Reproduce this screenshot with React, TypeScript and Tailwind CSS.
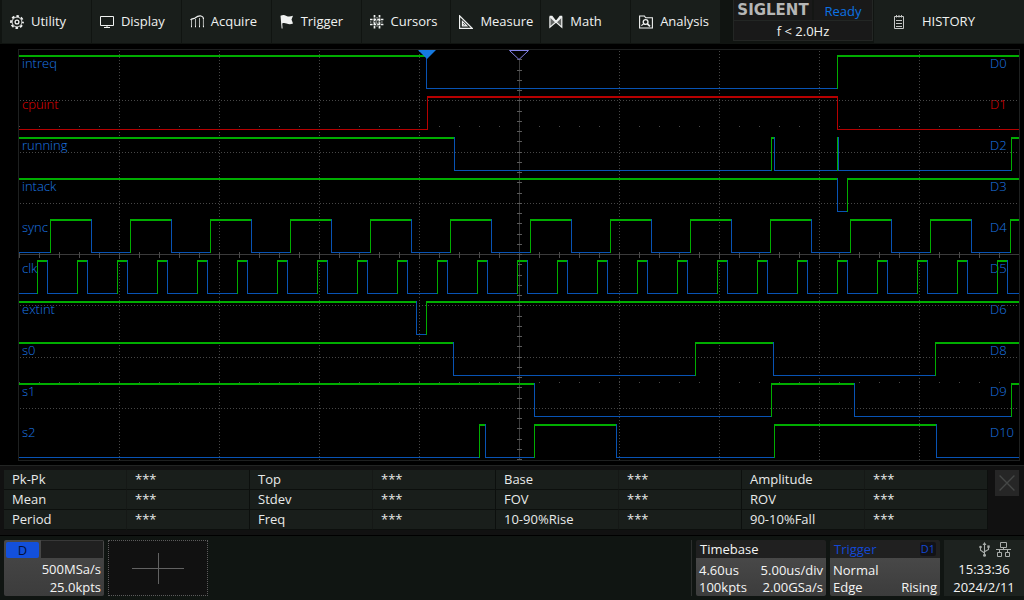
import type { ReactNode } from "react";

/* ---------- icons ---------- */

function Icon({ children, size = "size-[14px]" }: { children: ReactNode; size?: string }) {
  return (
    <svg
      viewBox="0 0 14 14"
      className={`${size} shrink-0`}
      fill="none"
      stroke="currentColor"
      strokeWidth="1.2"
      aria-hidden="true"
    >
      {children}
    </svg>
  );
}

const GearIcon = () => (
  <Icon>
    <circle cx="7" cy="7" r="6" strokeWidth="1.8" strokeDasharray="2.6 2.112" strokeDashoffset="1.3" />
    <circle cx="7" cy="7" r="4.9" strokeWidth="0.9" />
    <circle cx="7" cy="7" r="1.9" strokeWidth="1.3" />
  </Icon>
);

const DisplayIcon = () => (
  <Icon>
    <path d="M0.5 1.5H13.5V10.5H0.5Z" strokeWidth="1" />
    <path d="M7 10.5V12.5M4 12.5H10" strokeWidth="1" />
  </Icon>
);

const AcquireIcon = () => (
  <Icon>
    <path d="M0.5 5C2 3 3.5 4 5 3C7 1.5 9 0.6 11 1C12.8 1.4 13.5 2.5 13.5 4" />
    <path d="M1.5 5V12M5.5 4V12M9.5 3V12M13.4 4V12" strokeWidth="0.9" strokeOpacity="0.8" />
    <path d="M1 11.5H2M5 11.5H6M9 11.5H10M13 11.5H14" strokeWidth="1.6" />
  </Icon>
);

const FlagIcon = () => (
  <Icon>
    <path
      d="M0.5 0.8C3 -0.3 4.5 0 6.5 1C8.5 1.9 10.5 1.6 13 0.8L11.5 4.6L13 8.6C10.5 9.6 8.5 9.4 6.5 8.5C4.8 7.8 3.5 7.8 2.2 8.4L2.6 13.6H1.6Z"
      fill="currentColor"
      stroke="none"
    />
  </Icon>
);

const CursorsIcon = () => (
  <Icon>
    <path d="M4.5 0V14M9.5 0V14" strokeWidth="1.7" strokeDasharray="2.6 1" />
    <path d="M0 4.5H14M0 9.5H14" strokeWidth="1.7" strokeDasharray="2.6 1" />
    <path d="M0 7H14M7 2V12" strokeWidth="0.8" strokeDasharray="1.4 1.4" />
  </Icon>
);

const MeasureIcon = () => (
  <Icon>
    <path d="M0.6 0.8V13.4H13.2Z" />
    <path d="M3.4 6.4V10.8H7.8Z" />
    <path d="M4 8.8L5.6 10.6" strokeWidth="1" />
  </Icon>
);

const MathIcon = () => (
  <Icon>
    <path d="M0.6 1.4H3L7 6.6L11 1.4H13.2M0.9 1.4V12.2L7 7L12.8 12.2V1.4" strokeWidth="1.2" />
    <path d="M1 2V12L7 7ZM13 2V12L7 7Z" fill="currentColor" fillOpacity="0.35" stroke="none" />
    <path d="M1.4 1.6L7 7L12.6 1.6" strokeWidth="1.8" />
  </Icon>
);

const AnalysisIcon = () => (
  <Icon>
    <path d="M0.6 1H5.4L6.6 2.8H13.4V13H0.6Z" strokeWidth="1.1" />
    <circle cx="6.6" cy="7" r="2.4" strokeWidth="1.3" />
    <path d="M8.4 8.8L11 11.4" strokeWidth="1.7" />
    <path d="M2.4 10.6L4.8 8.6" />
  </Icon>
);

const HistoryIcon = () => (
  <svg viewBox="0 0 10 14" className="h-[14px] w-[10px] shrink-0" fill="none" stroke="#c4c6c5" aria-hidden="true">
    <path d="M0.5 1.5H9.5V13.5H0.5Z" />
    <path d="M2.5 0V2.5M5 0V2.5M7.5 0V2.5" />
    <path d="M2 5.5H8M2 8.5H8M2 11.5H8" />
  </svg>
);

const UsbIcon = () => (
  <svg viewBox="0 0 11 15" className="h-[15px] w-[11px]" fill="none" stroke="#a9adab" strokeWidth="1.1" aria-hidden="true">
    <path d="M5.5 2V13M1.5 5V8.2L5.5 11M9.5 4.5V7.4L5.5 9.8" />
    <path d="M5.5 0L7.4 3H3.6Z" fill="#a9adab" stroke="none" />
    <circle cx="5.5" cy="13.2" r="1.5" fill="#a9adab" stroke="none" />
    <circle cx="1.5" cy="5" r="1.3" fill="#a9adab" stroke="none" />
    <path d="M8.3 3.4H10.7V5.8H8.3Z" fill="#a9adab" stroke="none" />
  </svg>
);

const NetworkIcon = () => (
  <svg viewBox="0 0 15 15" className="size-[15px]" fill="none" stroke="#a9adab" aria-hidden="true">
    <path d="M4.5 0.5H10.5V5.5H4.5ZM1.5 10.5H5.5V14.5H1.5ZM9.5 10.5H13.5V14.5H9.5Z" />
    <path d="M7.5 5.5V7.5M0 7.5H15M3.5 7.5V10.5M11.5 7.5V10.5" />
  </svg>
);

/* ---------- data ---------- */

const menu = [
  { label: "Utility", icon: <GearIcon /> },
  { label: "Display", icon: <DisplayIcon /> },
  { label: "Acquire", icon: <AcquireIcon /> },
  { label: "Trigger", icon: <FlagIcon /> },
  { label: "Cursors", icon: <CursorsIcon /> },
  { label: "Measure", icon: <MeasureIcon /> },
  { label: "Math", icon: <MathIcon /> },
  { label: "Analysis", icon: <AnalysisIcon /> },
];

type Signal = { name: string; channel: string; startHigh: boolean; edges: number[]; selected?: boolean };

const clockEdges = (first: number, width: number, period: number) => {
  const edges: number[] = [];
  for (let x = first; x < 1019; x += period) {
    edges.push(x);
    if (x + width < 1019) edges.push(x + width);
  }
  return edges;
};

const signals: Signal[] = [
  { name: "intreq", channel: "D0", startHigh: true, edges: [426, 837] },
  { name: "cpuint", channel: "D1", startHigh: false, edges: [427, 837], selected: true },
  { name: "running", channel: "D2", startHigh: true, edges: [454, 771, 774, 837, 838, 1011] },
  { name: "intack", channel: "D3", startHigh: true, edges: [837, 847] },
  { name: "sync", channel: "D4", startHigh: false, edges: clockEdges(50, 41, 80) },
  { name: "clk", channel: "D5", startHigh: false, edges: clockEdges(37, 10, 40) },
  { name: "extint", channel: "D6", startHigh: true, edges: [416, 426] },
  { name: "s0", channel: "D8", startHigh: true, edges: [453, 695, 773, 935] },
  { name: "s1", channel: "D9", startHigh: true, edges: [534, 771, 854, 1011] },
  { name: "s2", channel: "D10", startHigh: false, edges: [479, 485, 534, 616, 774, 936] },
];

const measurements = [
  ["Pk-Pk", "Top", "Base", "Amplitude"],
  ["Mean", "Stdev", "FOV", "ROV"],
  ["Period", "Freq", "10-90%Rise", "90-10%Fall"],
];

/* ---------- waveform ---------- */

const LEFT = 19;
const RIGHT = 1019;

function Trace({ signal, top }: { signal: Signal; top: number }) {
  const rise = signal.selected ? "#b60000" : "#00ad00";
  const fall = signal.selected ? "#b60000" : "#0853b4";
  const points = [LEFT, ...signal.edges, RIGHT - 1];
  return (
    <g>
      {points.slice(0, -1).map((x, i) => {
        const high = signal.startHigh === (i % 2 === 0);
        const width = points[i + 1] - x + 1;
        return (
          <g key={x}>
            {i > 0 && <rect x={x} y={top} width="1" height="34" fill={high ? rise : fall} />}
            <rect x={x} y={high ? top : top + 33} width={width} height={high ? 2 : 1} fill={high ? rise : fall} />
          </g>
        );
      })}
    </g>
  );
}

const columns = [119, 219, 319, 419, 619, 719, 819, 919];
const rows = [100, 152, 203, 305, 357, 408];

function Waveform() {
  const xTicks = Array.from({ length: 50 }, (_, i) => 19 + i * 20);
  const yTicks = Array.from({ length: 40 }, (_, i) => Math.round(49 + (i + 1) * 10.25));
  return (
    <svg
      viewBox="18 49 1002 412"
      preserveAspectRatio="none"
      className="col-start-1 row-start-1 size-full"
      shapeRendering="crispEdges"
      role="img"
      aria-label="Digital channels"
    >
      <rect x="18.5" y="49.5" width="1001" height="411" fill="none" stroke="#1e2020" />
      <g stroke="#474747" strokeDasharray="1 2">
        {columns.map((x) => (
          <line key={x} x1={x + 0.5} x2={x + 0.5} y1="51" y2="460" />
        ))}
        {rows.map((y) => (
          <line key={y} x1="20" x2="1017" y1={y + 0.5} y2={y + 0.5} />
        ))}
      </g>
      <rect x="19" y="254" width="1000" height="1" fill="#3a3a3a" />
      <rect x="519" y="50" width="1" height="410" fill="#3a3a3a" />
      {xTicks.map((x) => (
        <g key={x} fill="#4a4a4a">
          <rect x={x} y="252" width="1" height="6" />
          <rect x={x} y="126" width="1" height="1" />
          <rect x={x} y="382" width="1" height="1" />
        </g>
      ))}
      {yTicks.map((y) => (
        <rect key={y} x="517" y={y} width="5" height="1" fill="#5a5a5a" />
      ))}
      {signals.map((s, i) => (
        <Trace key={s.channel} signal={s} top={55 + i * 41} />
      ))}
      <g shapeRendering="auto">
        <path d="M418 50H436L427 59Z" fill="#1579e0" />
        <path d="M509.5 50.5H528.5L519 59.5Z" fill="#000" stroke="#8583e8" />
      </g>
    </svg>
  );
}

function WaveformLabels() {
  return (
    <ul className="col-start-1 row-start-1 grid grid-rows-10 pb-0.5 font-light">
      {signals.map((s) => (
        <li
          key={s.channel}
          className={`flex justify-between pt-1 pl-1 leading-5 ${s.selected ? "text-[#e60000]" : "text-[#1c78e6]"}`}
        >
          <span>{s.name}</span>
          <span className="w-[30px]">{s.channel}</span>
        </li>
      ))}
    </ul>
  );
}

/* ---------- page ---------- */

function TopBar() {
  return (
    <header className="flex h-11 shrink-0 bg-[#101411] pl-0.5 text-[#f0f2f1]">
      <nav className="flex h-[43px] flex-1">
        {menu.map((m) => (
          <button
            key={m.label}
            type="button"
            className="flex flex-1 items-center gap-[7px] border-r border-[#101411] bg-[#191e1b] pl-2 text-left"
          >
            {m.icon}
            {m.label}
          </button>
        ))}
      </nav>
      <div className="ml-3 flex h-[41px] w-[140px] flex-col border border-t-0 border-[#232624] bg-[#191919]">
        <div className="flex h-[21px] border-b border-[#232624]">
          <div className="flex-1 border-r-2 border-[#141614] text-center font-['DejaVu_Sans',sans-serif] text-[15px] leading-5 font-bold text-[#b6b6b6]">
            SIGLENT
          </div>
          <div className="w-[58px] pt-px text-center leading-5 text-[#0c72e4]">Ready</div>
        </div>
        <div className="text-center leading-5">f &lt; 2.0Hz</div>
      </div>
      <button type="button" className="ml-px flex h-[43px] w-[150px] items-center gap-[18px] bg-[#191e1b] pl-5">
        <HistoryIcon />
        HISTORY
      </button>
    </header>
  );
}

function Measurements() {
  return (
    <section className="flex items-start gap-[7px] border-y border-[#222423] border-b-black bg-[#111] pt-1 pr-[5px] pb-[5px] pl-1">
      <table className="flex-1 table-fixed border-separate border-spacing-0 text-left text-[#e8eae9]">
        <tbody>
          {measurements.map((row) => (
            <tr key={row[0]}>
              {row.map((name) => [
                <th
                  key={name}
                  scope="row"
                  className="h-5 w-[123px] border-r border-b border-r-[#151816] border-b-[#0c0f0d] bg-[#191e1b] p-0 pl-2 leading-[19px] font-normal"
                >
                  {name}
                </th>,
                <td
                  key={`${name}-value`}
                  className="h-5 w-[123px] border-r border-b border-[#0c0f0d] bg-[#191e1b] p-0 pl-2 leading-[19px]"
                >
                  ***
                </td>,
              ])}
            </tr>
          ))}
        </tbody>
      </table>
      <button
        type="button"
        aria-label="Close measurements"
        className="flex h-[26px] w-6 items-center justify-center bg-[#262626] text-[#454746]"
      >
        <Icon size="size-4">
          <path d="M0.5 0.5L13.5 13.5M13.5 0.5L0.5 13.5" />
        </Icon>
      </button>
    </section>
  );
}

const cardBody = "bg-linear-to-b from-[#484848] to-[#3c3c3c]";

function BottomBar() {
  return (
    <footer className="flex h-16 shrink-0 items-start bg-[#101512] pt-1 pl-1 leading-[17px] text-[#f4f4f4]">
      <button
        type="button"
        className="flex h-14 w-[100px] flex-col rounded-xs bg-linear-to-b from-[#484848] to-[#3c3c3c] text-right"
      >
        <span className="flex h-[18px] w-full gap-0.5 pl-0.5">
          <span className="mt-0.5 h-4 w-[33px] rounded-xs bg-[#1350dc] text-center text-[#05103a]">D</span>
          <span className="mr-px flex-1 border-t border-[#383838] bg-[#202020]" />
        </span>
        <span className="w-full pt-0.5 pr-[3px] leading-[18px]">
          500MSa/s
          <br />
          25.0kpts
        </span>
      </button>
      <button
        type="button"
        aria-label="Add channel"
        className="ml-1 flex h-14 w-[100px] items-center justify-center border border-dotted border-[#5c5c5c] bg-[#111]"
      >
        <svg viewBox="0 0 52 31" className="h-[31px] w-[52px]" stroke="#626262" shapeRendering="crispEdges" aria-hidden="true">
          <path d="M0 15.5H52M26.5 0V31" />
        </svg>
      </button>
      <div className="ml-auto flex gap-1">
        <div className="h-14 w-px bg-[#2c2f2d]" />
        <section className="flex h-14 w-[130px] flex-col overflow-hidden rounded-xs">
          <h2 className="h-[18px] bg-[#202020] pl-1 leading-[18px]">Timebase</h2>
          <div className={`${cardBody} grid flex-1 grid-cols-[auto_auto] content-start justify-between px-[3px] pt-1`}>
            <span>4.60us</span>
            <span className="text-right">5.00us/div</span>
            <span>100kpts</span>
            <span className="text-right">2.00GSa/s</span>
          </div>
        </section>
        <section className="flex h-14 w-[110px] flex-col overflow-hidden rounded-xs">
          <div className="flex h-[18px] items-center justify-between bg-[#202020] px-1 text-[#1348d4]">
            <h2 className="leading-[18px]">Trigger</h2>
            <span className="rounded-xs bg-[#121216] px-px text-[11px] leading-[14px]">D1</span>
          </div>
          <div className={`${cardBody} grid flex-1 grid-cols-[auto_auto] content-start justify-between px-[3px] pt-1`}>
            <span className="col-span-2">Normal</span>
            <span>Edge</span>
            <span>Rising</span>
          </div>
        </section>
        <section className="flex h-14 w-20 flex-col bg-[#1d221f] text-center">
          <div className="flex justify-end gap-[6px] pt-0.5 pr-[13px]">
            <UsbIcon />
            <NetworkIcon />
          </div>
          <time className="pt-[3px] leading-[18px]">
            15:33:36
            <br />
            2024/2/11
          </time>
        </section>
      </div>
    </footer>
  );
}

export default function App() {
  return (
    <div className="flex min-h-screen flex-col bg-black font-['Open_Sans','Noto_Sans',sans-serif] text-[13px]">
      <TopBar />
      <main className="grid min-h-[421px] flex-1 grid-cols-1 grid-rows-[minmax(0,1fr)] pt-[5px] pr-1 pb-1 pl-[18px]">
        <WaveformLabels />
        <Waveform />
      </main>
      <Measurements />
      <BottomBar />
    </div>
  );
}
